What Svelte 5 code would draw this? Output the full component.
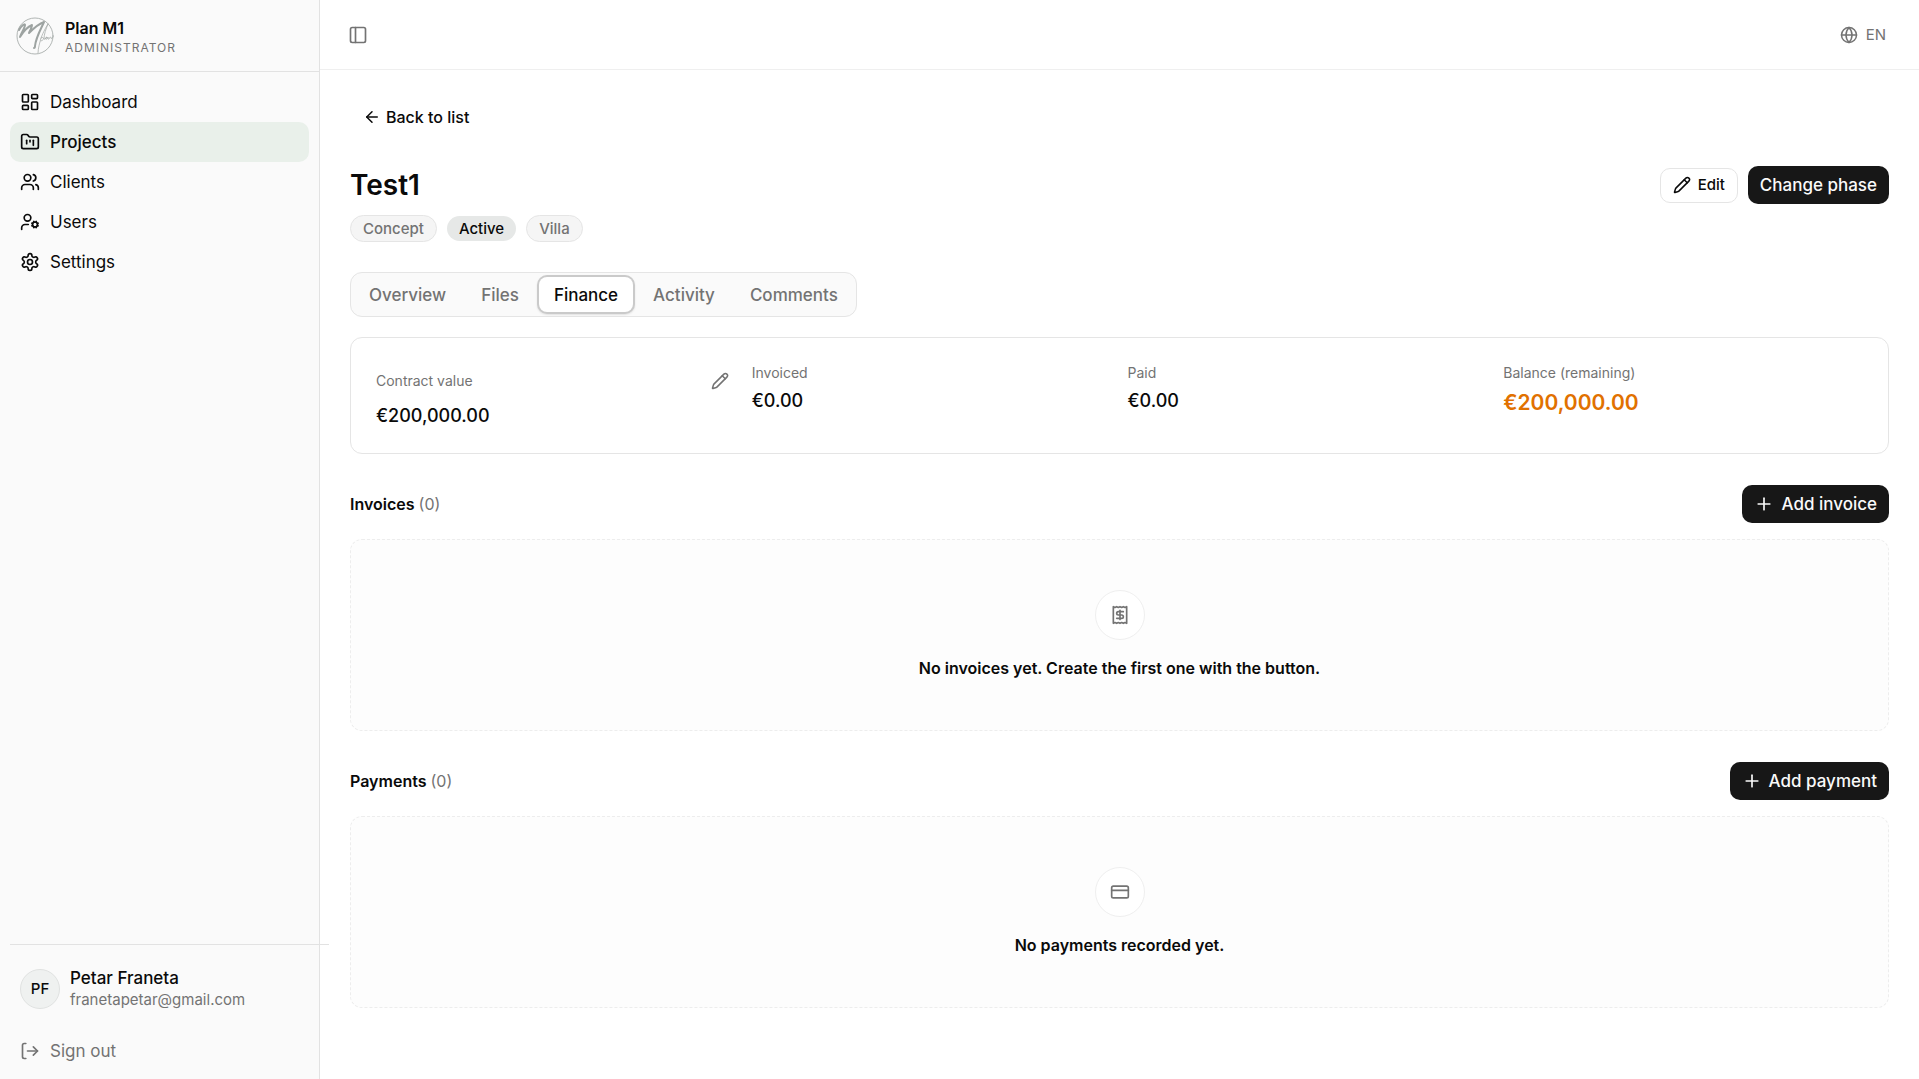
<script>
    let activeNav = 'Projects';
    let activeTab = 'Finance';

    const icons = {
        dashboard: '<rect width="7" height="9" x="3" y="3" rx="1"/><rect width="7" height="5" x="14" y="3" rx="1"/><rect width="7" height="9" x="14" y="12" rx="1"/><rect width="7" height="5" x="3" y="16" rx="1"/>',
        folder: '<path d="M4 20h16a2 2 0 0 0 2-2V8a2 2 0 0 0-2-2h-7.93a2 2 0 0 1-1.66-.9l-.82-1.2A2 2 0 0 0 7.93 3H4a2 2 0 0 0-2 2v13c0 1.1.9 2 2 2Z"/><path d="M8 10v4"/><path d="M12 10v2"/><path d="M16 10v6"/>',
        clients: '<path d="M16 21v-2a4 4 0 0 0-4-4H6a4 4 0 0 0-4 4v2"/><circle cx="9" cy="7" r="4"/><path d="M22 21v-2a4 4 0 0 0-3-3.87"/><path d="M16 3.13a4 4 0 0 1 0 7.75"/>',
        users: '<path d="M10 15H6a4 4 0 0 0-4 4v2"/><circle cx="9" cy="7" r="4"/><circle cx="18" cy="15" r="3"/><path d="m14.305 16.53.923-.382M15.228 13.852l-.923-.383M16.852 12.228l-.383-.923M16.852 17.772l-.383.924M19.148 12.228l.383-.923M19.53 18.696l-.382-.924M20.772 13.852l.924-.383M20.772 16.148l.924.383"/>',
        settings: '<path d="M12.22 2h-.44a2 2 0 0 0-2 2v.18a2 2 0 0 1-1 1.73l-.43.25a2 2 0 0 1-2 0l-.15-.08a2 2 0 0 0-2.73.73l-.22.38a2 2 0 0 0 .73 2.73l.15.1a2 2 0 0 1 1 1.72v.51a2 2 0 0 1-1 1.74l-.15.09a2 2 0 0 0-.73 2.73l.22.38a2 2 0 0 0 2.73.73l.15-.08a2 2 0 0 1 2 0l.43.25a2 2 0 0 1 1 1.73V20a2 2 0 0 0 2 2h.44a2 2 0 0 0 2-2v-.18a2 2 0 0 1 1-1.73l.43-.25a2 2 0 0 1 2 0l.15.08a2 2 0 0 0 2.73-.73l.22-.39a2 2 0 0 0-.73-2.73l-.15-.08a2 2 0 0 1-1-1.74v-.5a2 2 0 0 1 1-1.74l.15-.09a2 2 0 0 0 .73-2.73l-.22-.38a2 2 0 0 0-2.73-.73l-.15.08a2 2 0 0 1-2 0l-.43-.25a2 2 0 0 1-1-1.73V4a2 2 0 0 0-2-2z"/><circle cx="12" cy="12" r="3"/>',
        signout: '<path d="M7 21H5a2 2 0 0 1-2-2V5a2 2 0 0 1 2-2h2"/><path d="m16 17 5-5-5-5"/><path d="M21 12H9"/>',
        panel: '<rect width="18" height="18" x="3" y="3" rx="2"/><path d="M9 3v18"/>',
        globe: '<circle cx="12" cy="12" r="10"/><path d="M12 2a14.5 14.5 0 0 0 0 20 14.5 14.5 0 0 0 0-20"/><path d="M2 12h20"/>',
        back: '<path d="m12 19-7-7 7-7"/><path d="M19 12H5"/>',
        pencil: '<path d="M21.174 6.812a1 1 0 0 0-3.986-3.987L3.842 16.174a2 2 0 0 0-.5.83l-1.321 4.352a.5.5 0 0 0 .623.622l4.353-1.32a2 2 0 0 0 .83-.497z"/><path d="m15 5 4 4"/>',
        plus: '<path d="M5 12h14"/><path d="M12 5v14"/>',
        receipt: '<path d="M4 2v20l2-1 2 1 2-1 2 1 2-1 2 1 2-1 2 1V2l-2 1-2-1-2 1-2-1-2 1-2-1-2 1Z"/><path d="M16 8h-6a2 2 0 1 0 0 4h4a2 2 0 1 1 0 4H8"/><path d="M12 17.5v-11"/>',
        card: '<rect width="20" height="14" x="2" y="5" rx="2"/><path d="M2 10h20"/>'
    };

    const navItems = [
        { label: 'Dashboard', icon: 'dashboard' },
        { label: 'Projects', icon: 'folder' },
        { label: 'Clients', icon: 'clients' },
        { label: 'Users', icon: 'users' },
        { label: 'Settings', icon: 'settings' }
    ];

    const tabs = ['Overview', 'Files', 'Finance', 'Activity', 'Comments'];

    const totals = [
        { label: 'Contract value', value: '€200,000.00', editable: true },
        { label: 'Invoiced', value: '€0.00' },
        { label: 'Paid', value: '€0.00' },
        { label: 'Balance (remaining)', value: '€200,000.00', due: true }
    ];

    const sections = [
        { title: 'Invoices', items: [], action: 'Add invoice', icon: 'receipt', empty: 'No invoices yet. Create the first one with the button.' },
        { title: 'Payments', items: [], action: 'Add payment', icon: 'card', empty: 'No payments recorded yet.' }
    ];
</script>

{#snippet icon(name, size = 'md')}
    <svg class="icon {size}" viewBox="0 0 24 24" aria-hidden="true">{@html icons[name]}</svg>
{/snippet}

<div class="layout">
    <aside class="sidebar">
        <div class="brand">
            <svg class="logo" viewBox="0 0 38 38" aria-hidden="true">
                <circle cx="19" cy="19" r="18" stroke-width="0.8" />
                <path d="M3 13C5 9 9 6 9 8c0 3-4 8-5 12 3-5 7-10 12-12 0 3-2 5-3 8 4-4 9-9 15-11-3 7-8 15-9 24 0 2-1 2-1 2" stroke-width="2" stroke-linejoin="round" />
                <path d="M22 36c0-5 2-11 3-15 3-2 4 2 0 3M32 7c-2 5-4 10-4 15 1 1 2-1 3-2-2 0-2 3 0 2l1-2c0 1 0 3 1 2 1-2 2-3 2-1 0 1 1 1 2-1M32 7c-4 6-7 14-7 14" stroke-width="0.7" />
            </svg>
            <div class="brand-text">
                <span class="brand-name">Plan M1</span>
                <span class="role">Administrator</span>
            </div>
        </div>

        <nav class="nav">
            {#each navItems as item}
                <a
                    href="#{item.label.toLowerCase()}"
                    class="nav-item"
                    class:active={activeNav === item.label}
                    on:click={() => (activeNav = item.label)}
                >
                    {@render icon(item.icon)}
                    <span>{item.label}</span>
                </a>
            {/each}
        </nav>

        <div class="account">
            <hr />
            <div class="user">
                <div class="avatar">PF</div>
                <div class="user-text">
                    <span class="user-name">Petar Franeta</span>
                    <span class="email">franetapetar@gmail.com</span>
                </div>
            </div>
            <button type="button" class="sign-out">
                {@render icon('signout')}
                <span>Sign out</span>
            </button>
        </div>
    </aside>

    <div class="main">
        <header class="topbar">
            <button type="button" class="ghost" aria-label="Toggle sidebar">{@render icon('panel')}</button>
            <button type="button" class="ghost">{@render icon('globe', 'sm')} EN</button>
        </header>

        <main class="content">
            <a href="#list" class="back">{@render icon('back', 'sm')} Back to list</a>

            <div class="title-row">
                <h1>Test1</h1>
                <div class="actions">
                    <button type="button" class="outline">{@render icon('pencil', 'sm')} Edit</button>
                    <button type="button" class="primary">Change phase</button>
                </div>
            </div>
            <div class="badges">
                <span class="badge">Concept</span>
                <span class="badge solid">Active</span>
                <span class="badge">Villa</span>
            </div>

            <div class="tabs" role="tablist">
                {#each tabs as tab}
                    <button
                        type="button"
                        role="tab"
                        class="tab"
                        class:selected={activeTab === tab}
                        aria-selected={activeTab === tab}
                        on:click={() => (activeTab = tab)}
                    >{tab}</button>
                {/each}
            </div>

            <div class="totals">
                {#each totals as total}
                    <div class="total">
                        <div class="total-label" class:editable={total.editable}>
                            <span>{total.label}</span>
                            {#if total.editable}
                                <button type="button" class="edit-value" aria-label="Edit contract value">
                                    {@render icon('pencil', 'sm')}
                                </button>
                            {/if}
                        </div>
                        <div class="total-value" class:due={total.due}>{total.value}</div>
                    </div>
                {/each}
            </div>

            {#each sections as section}
                <section>
                    <div class="section-head">
                        <h2>{section.title} <span class="count">({section.items.length})</span></h2>
                        <button type="button" class="primary">{@render icon('plus')} {section.action}</button>
                    </div>
                    <div class="empty">
                        <div class="empty-icon">{@render icon(section.icon)}</div>
                        <p>{section.empty}</p>
                    </div>
                </section>
            {/each}
        </main>
    </div>
</div>

<style>
    :global(body) {
        margin: 0;
        background: #fff;
        color: #0a0a0a;
        font-family: Inter, "Liberation Sans", sans-serif;
        font-size: 17px;
        line-height: 24px;
    }

    * {
        box-sizing: border-box;
    }

    button {
        margin: 0;
        padding: 0;
        border: none;
        background: none;
        color: inherit;
        font: inherit;
        cursor: pointer;
    }

    a {
        color: inherit;
        text-decoration: none;
    }

    .icon {
        flex: none;
        width: 20px;
        height: 20px;
        fill: none;
        stroke: currentColor;
        stroke-width: 2;
        stroke-linecap: round;
        stroke-linejoin: round;
    }

    .icon.sm {
        width: 18px;
        height: 18px;
    }

    .layout {
        display: flex;
        min-height: 100vh;
    }

    /* Sidebar */
    .sidebar {
        display: flex;
        flex-direction: column;
        flex: none;
        width: 320px;
        border-right: 1px solid #e2e2e2;
        background: #fafafa;
    }

    .brand {
        display: flex;
        align-items: center;
        gap: 11px;
        height: 72px;
        padding: 0 16px;
        border-bottom: 1px solid #e2e2e2;
    }

    .logo {
        width: 38px;
        height: 38px;
        fill: none;
        stroke: #9da3a1;
        stroke-linecap: round;
    }

    .brand-text,
    .user-text {
        display: flex;
        flex-direction: column;
    }

    .brand-text {
        padding-top: 5px;
    }

    .brand-name {
        font-size: 16px;
        font-weight: 600;
        line-height: 20px;
    }

    .role {
        color: #737373;
        font-size: 12px;
        line-height: 20px;
        letter-spacing: 1px;
        text-transform: uppercase;
    }

    .nav {
        padding: 10px;
    }

    .nav-item,
    .sign-out {
        display: flex;
        align-items: center;
        gap: 10px;
        width: 100%;
        height: 40px;
        padding: 0 10px;
        border-radius: 10px;
    }

    .nav-item.active {
        background: #e9f0ea;
        font-weight: 500;
    }

    .account {
        margin-top: auto;
        padding: 0 0 8px;
    }

    hr {
        position: relative;
        width: 100%;
        height: 1px;
        margin: 0 10px;
        border: none;
        background: #e2e2e2;
    }

    .user {
        display: flex;
        align-items: center;
        gap: 10px;
        padding: 22px 20px 20px;
    }

    .avatar {
        display: flex;
        align-items: center;
        justify-content: center;
        width: 40px;
        height: 40px;
        border: 1px solid #e0e2e1;
        border-radius: 50%;
        background: #eff1f0;
        font-size: 15px;
        font-weight: 500;
    }

    .user-name {
        font-size: 17px;
        font-weight: 500;
        line-height: 22px;
    }

    .email {
        color: #737373;
        font-size: 15px;
        line-height: 22px;
    }

    .sign-out {
        padding: 0 20px;
        color: #737373;
    }

    /* Top bar */
    .main {
        flex: 1;
        min-width: 0;
    }

    .topbar {
        display: flex;
        align-items: center;
        justify-content: space-between;
        height: 70px;
        padding: 0 33px 0 28px;
        border-bottom: 1px solid #efefef;
    }

    .ghost {
        display: flex;
        align-items: center;
        gap: 8px;
        color: #737373;
        font-size: 15px;
    }

    .content {
        display: flex;
        flex-direction: column;
        align-items: stretch;
        padding: 30px;
    }

    .back {
        display: flex;
        align-items: center;
        align-self: flex-start;
        gap: 5px;
        height: 34px;
        padding: 0 13px;
        font-size: 16px;
        font-weight: 500;
    }

    /* Project header */
    .title-row {
        display: flex;
        align-items: center;
        justify-content: space-between;
        margin-top: 32px;
    }

    h1 {
        margin: 0;
        font-size: 28px;
        font-weight: 600;
        line-height: 38px;
    }

    .actions {
        display: flex;
        align-items: center;
        gap: 10px;
    }

    .outline,
    .primary {
        display: flex;
        align-items: center;
        justify-content: center;
        gap: 7px;
        border-radius: 10px;
        font-weight: 500;
    }

    .outline {
        height: 35px;
        padding: 0 12px;
        border: 1px solid #e5e5e5;
        background: #fff;
        font-size: 15px;
    }

    .primary {
        height: 38px;
        padding: 0 12px;
        background: #171717;
        color: #fafafa;
    }

    .badges {
        display: flex;
        align-items: center;
        gap: 10px;
        margin-top: 11px;
    }

    .badge {
        padding: 1px 12px;
        border: 1px solid #e5e5e5;
        border-radius: 14px;
        background: #f5f5f5;
        color: #737373;
        font-size: 15px;
        font-weight: 500;
        line-height: 23px;
    }

    .badge.solid {
        border: none;
        background: #e6e8e7;
        color: #0a0a0a;
    }

    .tabs {
        display: flex;
        align-self: flex-start;
        gap: 5px;
        margin-top: 30px;
        padding: 4px 3px;
        border: 1px solid #e5e5e5;
        border-radius: 12px;
        background: #fafafa;
    }

    .tab {
        height: 35px;
        padding: 0 15px;
        border-radius: 8px;
        color: #737373;
        font-weight: 500;
    }

    .tab.selected {
        background: #fff;
        color: #0a0a0a;
        box-shadow: 0 0 0 2px #cacaca, 0 1px 2px 2px rgba(0, 0, 0, 0.1);
    }

    /* Totals */
    .totals {
        display: grid;
        grid-template-columns: repeat(4, 1fr);
        gap: 16px;
        margin-top: 20px;
        padding: 25px;
        border: 1px solid #e5e5e5;
        border-radius: 12px;
    }

    .total-label {
        display: flex;
        align-items: center;
        justify-content: space-between;
        color: #737373;
        font-size: 14px;
        line-height: 20px;
    }

    .total-label.editable {
        height: 35px;
    }

    .edit-value {
        display: flex;
        align-items: center;
        justify-content: center;
        width: 32px;
        height: 32px;
    }

    .total-value {
        margin-top: 6px;
        font-size: 18px;
        font-weight: 500;
    }

    .total-value.due {
        color: #e17100;
        font-size: 21px;
        font-weight: 600;
        line-height: 28px;
    }

    /* Invoice and payment lists */
    section {
        margin-top: 31px;
    }

    .section-head {
        display: flex;
        align-items: center;
        justify-content: space-between;
    }

    h2,
    p {
        margin: 0;
        font-size: 16px;
        font-weight: 600;
    }

    .count {
        color: #737373;
        font-weight: 400;
    }

    .empty {
        display: flex;
        flex-direction: column;
        align-items: center;
        gap: 16px;
        margin-top: 16px;
        padding: 50px 20px;
        border: 1px dashed #ededed;
        border-radius: 12px;
        background: #fdfdfd;
    }

    .empty-icon {
        display: flex;
        align-items: center;
        justify-content: center;
        width: 50px;
        height: 50px;
        border: 1px solid #efefef;
        border-radius: 50%;
        background: #fff;
        color: #737373;
    }
</style>
